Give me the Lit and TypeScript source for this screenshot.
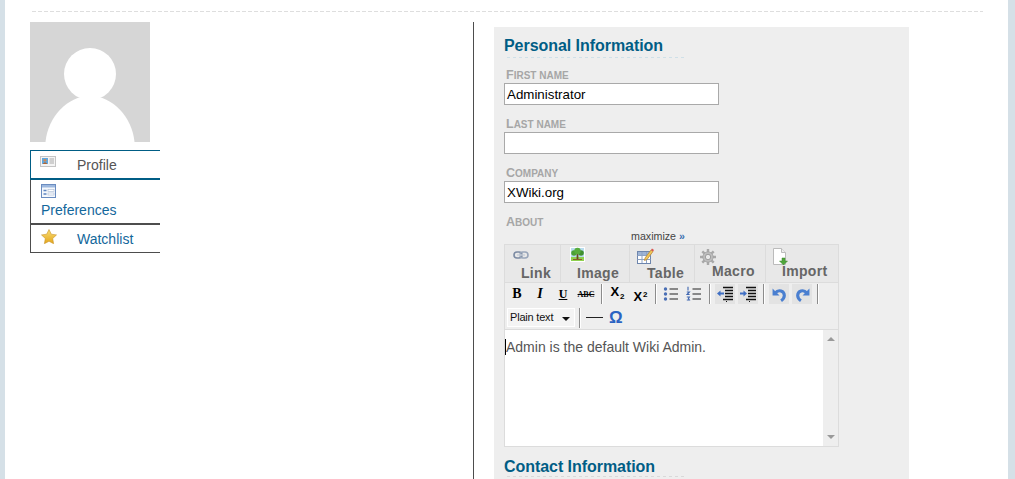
import { LitElement, html, css, svg } from "lit";
import { customElement } from "lit/decorators.js";

const linkIcon = svg`<svg width="16" height="10" viewBox="0 0 16 10"><rect x="1" y="2" width="8" height="6" rx="3" fill="none" stroke="#7c8ba3" stroke-width="1.6"/><rect x="7" y="2" width="8" height="6" rx="3" fill="none" stroke="#99a6ba" stroke-width="1.6"/><path d="M4 5h8" stroke="#c8ced8" stroke-width="1.4"/></svg>`;
const imageIcon = svg`<svg width="15" height="15" viewBox="0 0 15 15"><rect width="15" height="15" fill="#fff"/><rect x="1" y="1" width="13" height="9" fill="#b9dcee"/><rect x="1" y="10" width="13" height="4" fill="#8fd04f"/><path d="M7.500 13V7" stroke="#6b4a22" stroke-width="1.800"/><path d="M3 12.500h9" stroke="#8b5a2b"/><circle cx="4" cy="6" r="2.800" fill="#4ca035"/><circle cx="11" cy="6" r="2.800" fill="#3f8f2f"/><circle cx="7.500" cy="4" r="3.200" fill="#58ad3c"/></svg>`;
const tableIcon = svg`<svg width="17" height="17" viewBox="0 0 17 17"><rect x=".5" y="3.500" width="13" height="12" fill="#fff" stroke="#6e86ad"/><rect x="1" y="4" width="12" height="3" fill="#9db4d6"/><path d="M.5 7.500h13M.5 11.500h13M5 4v11M9.500 4v11" stroke="#8ea3c4"/><path d="M8 10l6-8 2 1.500-6 8-2.500 1z" fill="#f0c75a" stroke="#b7812c" stroke-width=".7"/><path d="M14 2l1-1.500 2 1.500-1 1.500z" fill="#d9534f"/></svg>`;
const gearIcon = svg`<svg width="16" height="16" viewBox="0 0 16 16"><g stroke="#a8a8a8" stroke-width="2.400"><path d="M8 0v16M0 8h16M2.300 2.300l11.400 11.400M13.700 2.300L2.300 13.700"/></g><circle cx="8" cy="8" r="5.200" fill="#bdbdbd" stroke="#999" stroke-width=".6"/><circle cx="8" cy="8" r="2.700" fill="#e8e8e8" stroke="#8f8f8f" stroke-width=".8"/></svg>`;
const importIcon = svg`<svg width="17" height="18" viewBox="0 0 17 18"><path d="M1.500.5h8l4 4v12h-12z" fill="#fff" stroke="#bbb"/><path d="M9.500.5v4h4" fill="#eee" stroke="#bbb"/><path d="M10 10h3v3h2.500L11.500 17l-4-4H10z" fill="#4fa53a" stroke="#3b8a2c" stroke-width=".5"/></svg>`;
const ulIcon = svg`<svg width="16" height="16" viewBox="0 0 16 16"><g fill="#4a6fb5"><circle cx="2.500" cy="3" r="1.700"/><circle cx="2.500" cy="8" r="1.700"/><circle cx="2.500" cy="13" r="1.700"/></g><path d="M6.500 3H15M6.500 8H15M6.500 13H15" stroke="#222" stroke-width="1.100"/></svg>`;
const olIcon = svg`<svg width="16" height="16" viewBox="0 0 16 16"><path d="M2 .8v3.600M.8 6h2.600L1 8.500h2.600M.8 11h2.600l-1 1.500 1 1.500H.8" stroke="#3f66b0" stroke-width="1.100" fill="none"/><path d="M6.500 3H15M6.500 8H15M6.500 13H15" stroke="#222" stroke-width="1.100"/></svg>`;
const outdentIcon = svg`<svg width="17" height="16" viewBox="0 0 17 16"><path d="M6 1.500h10M8 4.500h8M8 7.500h8M8 10.500h8M6 13.500h10" stroke="#111" stroke-width="1.300"/><path d="M9 15.500h1" stroke="#111"/><path d="M0 7.500l3.500-3v2H7v2H3.500v2z" fill="#3f6fc4"/></svg>`;
const indentIcon = svg`<svg width="17" height="16" viewBox="0 0 17 16"><path d="M6 1.500h10M8 4.500h8M8 7.500h8M8 10.500h8M6 13.500h10" stroke="#111" stroke-width="1.300"/><path d="M9 15.500h1" stroke="#111"/><path d="M7 7.500l-3.500-3v2H0v2h3.500v2z" fill="#3f6fc4"/></svg>`;
const undoIcon = svg`<svg width="15" height="15" viewBox="0 0 14 14"><path d="M3 5.500c3-3.500 8.500-2 8.500 2.500 0 2-1 3.500-3 4.800" fill="none" stroke="#4a7fd0" stroke-width="2.900"/><path d="M.5 1.500v6.500h6.500z" fill="#4a7fd0"/></svg>`;
const redoIcon = svg`<svg width="15" height="15" viewBox="0 0 14 14"><path d="M11 5.500c-3-3.500-8.500-2-8.500 2.500 0 2 1 3.500 3 4.800" fill="none" stroke="#4a7fd0" stroke-width="2.900"/><path d="M13.500 1.500v6.500H7z" fill="#4a7fd0"/></svg>`;
const profileIcon = svg`<svg width="16" height="12" viewBox="0 0 16 12"><rect x=".5" y=".5" width="15" height="10" fill="#f4f4f4" stroke="#c4c4c4"/><rect x="2" y="2" width="6" height="6" fill="#5fa8e0"/><circle cx="5" cy="4.300" r="1.400" fill="#d08a55"/><path d="M3 8c0-2 4-2 4 0z" fill="#b5652f"/><path d="M9.500 3h4.500M9.500 5h4.500M9.500 7h4.500" stroke="#aaa"/></svg>`;
const prefsIcon = svg`<svg width="15" height="14" viewBox="0 0 15 14"><rect x=".5" y=".5" width="14" height="13" fill="#f5f8fc" stroke="#6a8cc0"/><rect x="1" y="1" width="13" height="2.500" fill="#9db8de"/><path d="M2.500 6.500h3M2.500 10h3" stroke="#5b83c0" stroke-width="1.300"/><rect x="7" y="5.500" width="6" height="2" fill="#fff" stroke="#a9b9d2" stroke-width=".6"/><rect x="7" y="9" width="6" height="2" fill="#fff" stroke="#a9b9d2" stroke-width=".6"/></svg>`;
const starIcon = svg`<svg width="16" height="15" viewBox="0 0 16 15"><defs><linearGradient id="st" x1="0" y1="0" x2="0" y2="1"><stop offset="0" stop-color="#f9de73"/><stop offset="1" stop-color="#e3a51c"/></linearGradient></defs><path d="M8 .5l2.300 4.700 5.200.7-3.800 3.600.9 5.200L8 12.300 3.400 14.700l.9-5.200L.5 5.900l5.200-.7z" fill="url(#st)" stroke="#c9962c" stroke-width=".6"/></svg>`;

const tabs = [
  { label: "Link", icon: linkIcon, w: 56, ix: 8, iy: 5, lx: 16, ly: 5 },
  { label: "Image", icon: imageIcon, w: 69, ix: 9, iy: 2, lx: 16, ly: 3 },
  { label: "Table", icon: tableIcon, w: 65, ix: 7, iy: 3, lx: 17, ly: 0 },
  { label: "Macro", icon: gearIcon, w: 71, ix: 5, iy: 4, lx: 17, ly: -2 },
  { label: "Import", icon: importIcon, w: 72, ix: 6, iy: 3, lx: 16, ly: -3 },
];

@customElement("app-root")
export class AppRoot extends LitElement {
  static styles = css`
    :host { display: block; height: 479px; overflow: hidden; background: #d5e0e7; font-family: "Liberation Sans", Arial, sans-serif; }
    .page { margin: 0 7px 0 5px; height: 479px; background: #fff; overflow: hidden; }
    .rule { height: 1px; margin: 11px 25px 0 27px; background: repeating-linear-gradient(90deg, #dedede 0 4px, transparent 4px 6px); }
    .cols { display: flex; margin-top: 10px; height: 457px; }
    .left { width: 130px; margin-left: 25px; flex: none; }
    .avatar { display: block; width: 120px; height: 120px; margin-bottom: 8px; }
    .item { font-size: 14px; border-left: 1px solid #4d4d4d; display: block; }
    .item.profile { height: 27px; border-top: 1px solid #005d85; border-left-color: #005d85; border-bottom: 2px solid #005d85; display: flex; align-items: center; color: #555; }
    .item.prefs { border-bottom: 2px solid #4d4d4d; color: #13679b; padding: 4px 0 0 10px; height: 39px; }
    .item.prefs svg { display: block; }
    .item.prefs span { display: block; margin-top: 4px; line-height: 16px; }
    .item.watch { height: 27px; border-bottom: 1px solid #4d4d4d; display: flex; align-items: center; color: #13679b; }
    .ico { width: 46px; padding-left: 9px; flex: none; box-sizing: border-box; display: flex; }
    .profile .ico { margin-top: -5px; }
    .watch .ico { margin-top: -5px; padding-left: 10px; }
    .right { margin-left: 313px; border-left: 1px solid #4d4d4d; padding: 5px 0 0 20px; flex: none; }
    .panel { width: 395px; padding: 10px 10px 0; background: #eee; height: 452px; overflow: hidden; }
    h2 { margin: 0; font-size: 16px; line-height: 18px; font-weight: bold; color: #005d85; letter-spacing: -.05px; }
    .dash { height: 1px; width: 177px; margin: 2px 0 0 3px; background: repeating-linear-gradient(90deg, #cfe0e8 0 3px, transparent 3px 6px); }
    .dash.grey { background: repeating-linear-gradient(90deg, #d9d9d9 0 3px, transparent 3px 6px); margin-top: 0; }
    label { display: block; height: 14px; margin-left: 2px; font-size: 10px; line-height: 14px; font-weight: bold; text-transform: uppercase; color: #a6a6a6; }
    label::first-letter { font-size: 12.5px; }
    .first { margin-top: 10px; }
    .field { box-sizing: border-box; display: block; width: 215px; height: 22px; margin: 1px 0 12px; padding: 0 2px; border: 1px solid #a9a9a9; background: #fff; font: 13.33px/22px "Liberation Sans", Arial, sans-serif; color: #000; }
    .max { font-size: 10.67px; line-height: 12px; margin: 1px 0 2px 127px; color: #444; }
    .max b { color: #3a6fb0; }
    .editor { box-sizing: border-box; width: 335px; height: 203px; border: 1px solid #dcdcdc; background: #eee; }
    .tabs { display: flex; height: 37px; background: #e8e8e8; }
    .tab { box-sizing: border-box; border-right: 1px solid #dcdcdc; flex: none; }
    .tab:last-child { border-right: 0; }
    .tab svg { display: block; }
    .tab span { display: block; font-size: 14px; line-height: 16px; font-weight: bold; color: #666; letter-spacing: .3px; }
    .bar { display: flex; align-items: flex-start; gap: 3px; height: 24px; padding: 1px 0 0 2px; border-top: 1px solid #dcdcdc; box-sizing: border-box; }
    .btn { width: 20px; height: 20px; flex: none; display: flex; align-items: center; justify-content: center; color: #000; font-size: 12px; }
    .btn.hl { background: #e3e3e3; }
    .btn.b { font: bold 14px "Liberation Serif", serif; }
    .btn.i { font: italic bold 14px "Liberation Serif", serif; }
    .btn.u { font: bold 12px "Liberation Serif", serif; text-decoration: underline; }
    .btn.s { font: bold 8px "Liberation Serif", serif; text-decoration: line-through; }
    .btn.x { font: bold 13px "Liberation Sans", sans-serif; }
    .btn.x.low { align-items: flex-end; }
    .btn.x.high { align-items: flex-start; }
    .sub { font-size: 8px; position: relative; top: 3px; left: 1px; }
    .sup { font-size: 8px; position: relative; top: -4px; left: 1px; }
    .sep { width: 1px; height: 20px; background: #8c8c8c; border-right: 1px solid #fff; margin: 0 1px 0 2px; flex: none; }
    .row2 { height: 23px; padding: 0 0 0 2px; border: 0; gap: 0; align-items: center; }
    .select { box-sizing: border-box; width: 68px; height: 19px; border: 1px solid #fff; background: #f4f4f4; font-size: 11px; letter-spacing: -.2px; line-height: 17px; padding-left: 2px; color: #111; position: relative; flex: none; }
    .select i { position: absolute; right: 4px; top: 8px; border: 4px solid transparent; border-top-color: #111; border-bottom: 0; }
    .row2 .sep { margin: 0 0 0 4px; }
    .hr { width: 17px; height: 1px; background: #222; margin: 0 0 0 5px; flex: none; }
    .omega { font: bold 17px "Liberation Sans", sans-serif; color: #2b63c2; margin-left: 6px; }
    .area { display: flex; height: 117px; border-top: 1px solid #dcdcdc; box-sizing: border-box; }
    .text { flex: 1; background: #fff; font-size: 14px; line-height: 16px; color: #555; padding-top: 9px; }
    .text span { border-left: 1px solid #000; }
    .scroll { width: 16px; flex: none; border-left: 1px solid #fff; display: flex; flex-direction: column; justify-content: space-between; align-items: center; padding: 7px 0; box-sizing: border-box; }
    .up { border: 4px solid transparent; border-bottom-color: #999; border-top: 0; }
    .down { border: 4px solid transparent; border-top-color: #999; border-bottom: 0; }
    .contact { margin-top: 11px; }
  `;

  render() {
    return html`
      <div class="page">
        <div class="rule"></div>
        <div class="cols">
          <div class="left">
            <svg class="avatar" viewBox="0 0 120 120">
              <rect width="120" height="120" fill="#d6d6d6" />
              <circle cx="60" cy="52" r="26" fill="#fff" />
              <path d="M15.500 120C18 95 37 74 60 74s42 21 44.500 46z" fill="#fff" />
            </svg>
            <div class="item profile"><span class="ico">${profileIcon}</span>Profile</div>
            <div class="item prefs">${prefsIcon}<span>Preferences</span></div>
            <div class="item watch"><span class="ico">${starIcon}</span>Watchlist</div>
          </div>
          <div class="right">
            <div class="panel">
              <h2>Personal Information</h2>
              <div class="dash"></div>
              <label class="first">First name</label>
              <div class="field">Administrator</div>
              <label>Last name</label>
              <div class="field"></div>
              <label>Company</label>
              <div class="field">XWiki.org</div>
              <label>About</label>
              <div class="max">maximize <b>»</b></div>
              <div class="editor">
                <div class="tabs">
                  ${tabs.map(
                    (t) => html`<div class="tab" style="width:${t.w}px;padding:${t.iy}px 0 0 ${t.ix}px">
                      ${t.icon}<span style="margin:${t.ly}px 0 0 ${t.lx - t.ix}px">${t.label}</span>
                    </div>`
                  )}
                </div>
                <div class="bar">
                  <div class="btn b">B</div><div class="btn i">I</div><div class="btn u">U</div><div class="btn s">ABC</div>
                  <div class="sep"></div>
                  <div class="btn x high"><span>X<span class="sub">2</span></span></div><div class="btn x low"><span>X<span class="sup">2</span></span></div>
                  <div class="sep"></div>
                  <div class="btn">${ulIcon}</div><div class="btn">${olIcon}</div>
                  <div class="sep"></div>
                  <div class="btn hl">${outdentIcon}</div><div class="btn hl">${indentIcon}</div>
                  <div class="sep"></div>
                  <div class="btn hl">${undoIcon}</div><div class="btn hl">${redoIcon}</div>
                  <div class="sep"></div>
                </div>
                <div class="bar row2">
                  <div class="select">Plain text<i></i></div>
                  <div class="sep"></div>
                  <div class="hr"></div>
                  <div class="omega">Ω</div>
                </div>
                <div class="area">
                  <div class="text"><span>Admin is the default Wiki Admin.</span></div>
                  <div class="scroll"><div class="up"></div><div class="down"></div></div>
                </div>
              </div>
              <h2 class="contact">Contact Information</h2>
              <div class="dash grey"></div>
            </div>
          </div>
        </div>
      </div>
    `;
  }
}
